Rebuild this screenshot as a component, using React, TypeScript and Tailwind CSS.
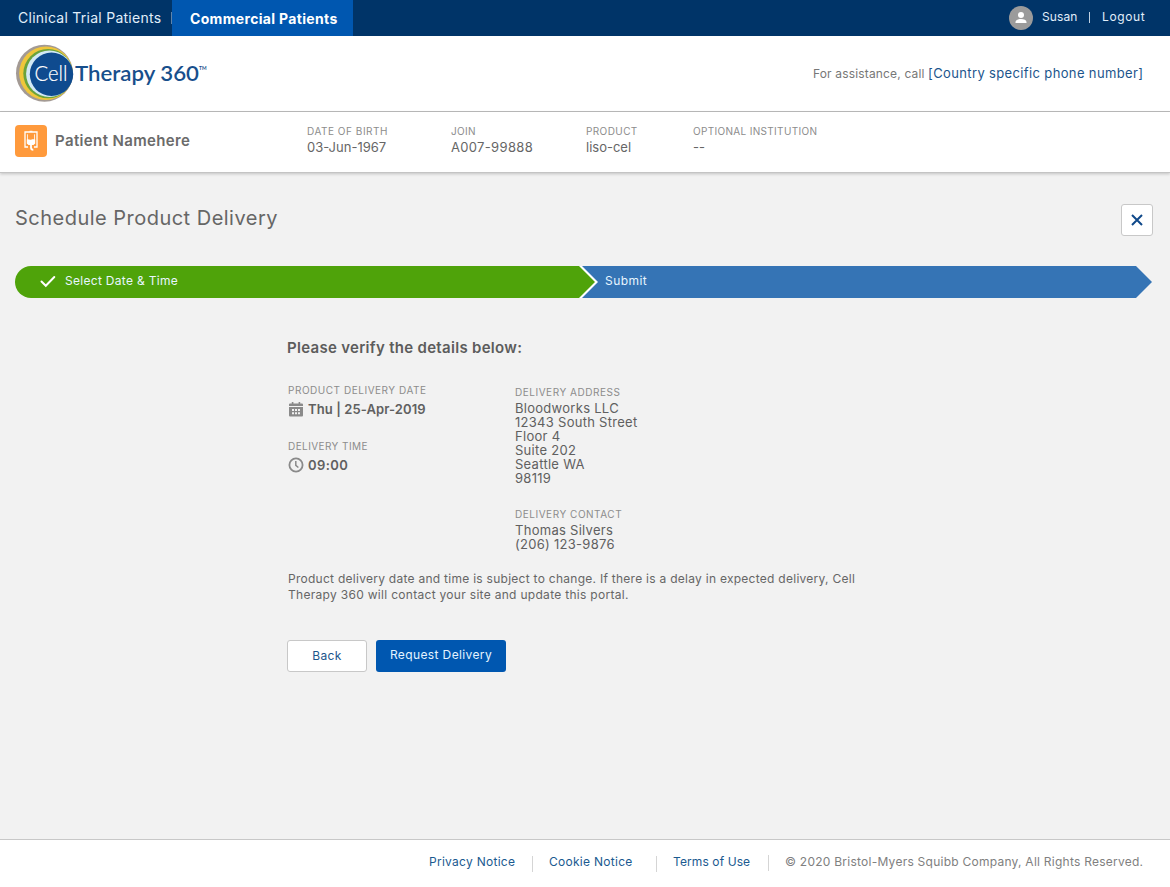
import React from 'react';

interface FieldProps {
  label: string;
  labelClass?: string;
  children: React.ReactNode;
}

const Field: React.FC<FieldProps> = ({ label, labelClass = 'tracking-[0.53px]', children }) => (
  <div className="whitespace-nowrap">
    <div className={`text-[10px] leading-4 text-[#8c8c8c] uppercase ${labelClass}`}>{label}</div>
    {children}
  </div>
);

const Logo: React.FC = () => (
  <svg width="194" height="60" viewBox="14 43 194 60" fontFamily="Lato, sans-serif">
    <circle cx="44.5" cy="73.2" r="28.5" fill="#a39a94" />
    <circle cx="46" cy="73.3" r="26.8" fill="#efc63c" />
    <circle cx="48" cy="73.6" r="24.7" fill="#6aa33c" />
    <circle cx="49.4" cy="73.8" r="23.3" fill="#d3e9f5" />
    <circle cx="51.5" cy="74.3" r="21.7" fill="#0f4b8f" />
    <text x="34.5" y="81" fontSize="22" fontWeight="300" fill="#fff" stroke="#fff" strokeWidth="0.2" textLength="33" lengthAdjust="spacingAndGlyphs">
      Cell
    </text>
    <text x="75" y="81" fontSize="21.500" fontWeight="600" fill="#174f8c" textLength="124" lengthAdjust="spacingAndGlyphs">
      Therapy 360
    </text>
    <text x="199" y="70" fontSize="5.500" fontWeight="700" fill="#174f8c" textLength="7.500" lengthAdjust="spacingAndGlyphs">
      TM
    </text>
  </svg>
);

const AvatarIcon: React.FC = () => (
  <svg width="24" height="24" viewBox="0 0 24 24">
    <circle cx="12" cy="12" r="12" fill="#9b9b9b" />
    <circle cx="12" cy="9" r="3" fill="#fff" />
    <path d="M6.500 17v-1c0-2 2.500-3 5.500-3s5.500 1 5.500 3v1z" fill="#fff" />
  </svg>
);

const InfusionBagIcon: React.FC = () => (
  <svg width="32" height="32" viewBox="0 0 32 32" fill="none" stroke="#fff">
    <path d="M13 22H10V7h12v15h-3" strokeWidth="1.300" />
    <path d="M14.500 6.300h3" strokeWidth="1" />
    <path d="M12.500 9.300v9h7v-9" strokeWidth="0.800" />
    <path d="M11.800 14.500c1.700-.6 2.700.6 4.200.2 1.500-.5 2.500-.6 4.200-.2v4l-1.700 1.500h-5l-1.700-1.500z" fill="#fff" stroke="none" />
    <path d="M16 19v3.500c0 1.700.8 2.300 2.300 2.300" strokeWidth="1.800" />
  </svg>
);

const CalendarIcon: React.FC = () => (
  <svg width="14" height="15" viewBox="0 0 14 15" fill="#8a8a8a">
    <path d="M0 5h14v8.500a1 1 0 0 1-1 1H1a1 1 0 0 1-1-1z" />
    <path d="M0 4V2.500a1 1 0 0 1 1-1h1.800V0h1.600v1.500h5.200V0h1.600v1.500H13a1 1 0 0 1 1 1V4z" />
    <path d="M3 7h2v2H3zM6 7h2v2H6zM9 7h2v2H9zM3 10.200h2v2H3zM6 10.200h2v2H6zM9 10.200h2v2H9z" fill="#f2f2f2" />
  </svg>
);

const ClockIcon: React.FC = () => (
  <svg width="16" height="16" viewBox="0 0 16 16" fill="none" stroke="#8a8a8a">
    <circle cx="8" cy="8" r="6.600" strokeWidth="1.800" />
    <path d="M7.800 4v4.300l2.600 2.200" strokeWidth="1.500" />
  </svg>
);

const TopBar: React.FC = () => (
  <nav className="flex h-9 items-stretch bg-[#003468] text-[#e0eefa] whitespace-nowrap">
    <div className="flex w-[172px] items-center justify-between pl-[18px]">
      <span className="text-[14px] leading-4 tracking-[0.26px]">Clinical Trial Patients</span>
      <span className="h-3 w-px bg-[#5f83a9]" />
    </div>
    <div className="flex w-[181px] items-center bg-[#0057b0] pt-0.5 pl-[18px] text-[14px] leading-4 font-bold text-white">
      <span className="tracking-[0.33px]">Commercial Patients</span>
    </div>
    <div className="ml-auto flex items-center pr-6 text-[12px] leading-4">
      <AvatarIcon />
      <span className="ml-[9px] w-[47px] pb-0.5 tracking-[0.1px]">Susan</span>
      <span className="mb-0.5 h-[11px] w-px bg-[#c0d0e0]" />
      <span className="ml-3 w-11 pb-0.5 tracking-[0.6px]">Logout</span>
    </div>
  </nav>
);

const PatientBar: React.FC = () => (
  <section className="grid h-[61px] grid-cols-[292px_144px_135px_107px_1fr] border-b border-[#c4c4c4] bg-white pt-[11px] pl-[15px] shadow-[0_1px_3px_rgba(0,0,0,0.2)]">
    <div className="mt-0.5 flex h-8 items-center gap-2">
      <div className="rounded bg-[#ff9a3c]">
        <InfusionBagIcon />
      </div>
      <span className="text-[15px] leading-4 font-semibold tracking-[0.37px] text-[#6b6b6b]">Patient Namehere</span>
    </div>
    <Field label="Date of birth">
      <div className="text-[13px] leading-4 text-[#666]">03-Jun-1967</div>
    </Field>
    <Field label="Join" labelClass="tracking-[0.35px]">
      <div className="text-[13px] leading-4 tracking-[0.33px] text-[#666]">A007-99888</div>
    </Field>
    <Field label="Product" labelClass="tracking-[0.4px]">
      <div className="text-[13px] leading-4 text-[#666]">liso-cel</div>
    </Field>
    <Field label="Optional institution" labelClass="tracking-[0.33px]">
      <div className="text-[13px] leading-4 text-[#666]">--</div>
    </Field>
  </section>
);

const Stepper: React.FC = () => (
  <div className="mt-[30px] flex h-8 text-[12px] leading-4 text-[#e8f6ff]">
    <div className="z-10 w-[583px] rounded-l-full bg-white [clip-path:polygon(0_0,567px_0,583px_50%,567px_100%,0_100%)]">
      <div className="flex h-8 w-[580px] items-center gap-2 rounded-l-full bg-[#4fa30a] pl-6 [clip-path:polygon(0_0,564px_0,580px_50%,564px_100%,0_100%)]">
        <svg width="18" height="16" viewBox="0 0 18 16" fill="none" stroke="#fff" strokeWidth="2" strokeLinecap="round">
          <path d="M2.500 7.500l4.300 4.300L15.300 3" />
        </svg>
        <span className="pb-0.5 tracking-[0.3px]">Select Date &amp; Time</span>
      </div>
    </div>
    <div className="-ml-4 flex w-[570px] items-center bg-[#3574b5] pl-[23px] [clip-path:polygon(0_0,554px_0,570px_50%,554px_100%,0_100%)]">
      <span className="pb-0.5 tracking-[0.45px]">Submit</span>
    </div>
  </div>
);

const addressLines = ['Bloodworks LLC', '12343 South Street', 'Floor 4', 'Suite 202', 'Seattle WA', '98119'];
const contactLines = ['Thomas Silvers', '(206) 123-9876'];

const Details: React.FC = () => (
  <div className="ml-[272px] w-[600px] pt-[42px]">
    <h2 className="text-[15px] leading-4 font-semibold tracking-[0.3px] text-[#5c5c5c]">Please verify the details below:</h2>
    <div className="mt-[26px] grid grid-cols-[227px_1fr] pl-px text-[13px] text-[#606060]">
      <div>
        <Field label="Product delivery date">
          <div className="mt-px flex h-5 items-center gap-[5px] leading-5 font-semibold tracking-[0.1px]">
            <span className="ml-px">
              <CalendarIcon />
            </span>
            Thu | 25-Apr-2019
          </div>
        </Field>
        <div className="mt-[19px]">
          <Field label="Delivery time" labelClass="tracking-[0.42px]">
            <div className="mt-px flex h-5 items-center gap-1 leading-5 font-semibold tracking-[0.4px]">
              <ClockIcon />
              09:00
            </div>
          </Field>
        </div>
      </div>
      <div className="pt-0.5 tracking-[0.28px]">
        <Field label="Delivery address">
          <div className="pt-px">
            {addressLines.map((line) => (
              <div key={line} className="leading-[14px]">
                {line}
              </div>
            ))}
          </div>
        </Field>
        <div className="mt-[21px]">
          <Field label="Delivery contact">
            <div className="pt-px">
              {contactLines.map((line) => (
                <div key={line} className="leading-[14px]">
                  {line}
                </div>
              ))}
            </div>
          </Field>
        </div>
      </div>
    </div>
    <p className="mt-5 ml-px text-[12px] leading-4 tracking-[0.27px] whitespace-nowrap text-[#666]">
      Product delivery date and time is subject to change. If there is a delay in expected delivery, Cell
      <br />
      <span className="tracking-[0.3px]">Therapy 360 will contact your site and update this portal.</span>
    </p>
    <div className="mt-[37px] flex gap-[9px] text-[12px] leading-4">
      <button className="h-8 w-20 rounded-[3px] border border-[#c8c8c8] bg-white tracking-[0.4px] text-[#1c558c]">Back</button>
      <button className="h-8 w-[130px] rounded-[3px] bg-[#0057b0] pb-0.5 tracking-[0.38px] text-[#e4f3ff]">Request Delivery</button>
    </div>
  </div>
);

const Footer: React.FC = () => (
  <footer className="flex h-12 items-start border-t border-[#c8c8c8] bg-white pt-3.5 pl-[429px] text-[12px] leading-4 whitespace-nowrap text-[#1b5a90]">
    <a className="w-[103px] tracking-[0.28px]">Privacy Notice</a>
    <span className="mt-0.5 h-4 w-px bg-[#d5d5d5]" />
    <a className="ml-4 w-[107px] tracking-[0.28px]">Cookie Notice</a>
    <span className="mt-0.5 h-4 w-px bg-[#d5d5d5]" />
    <a className="ml-4 w-[95px] tracking-[0.1px]">Terms of Use</a>
    <span className="mt-px h-4 w-px bg-[#d5d5d5]" />
    <span className="ml-4 tracking-[0.25px] text-[#808080]">© 2020 Bristol-Myers Squibb Company, All Rights Reserved.</span>
  </footer>
);

const App: React.FC = () => (
  <div className="flex h-[887px] w-[1170px] flex-col overflow-hidden bg-[#f2f2f2] font-['Inter',sans-serif]">
    <TopBar />
    <header className="flex h-[76px] items-center border-b border-[#bcbcbc] bg-white pl-3.5">
      <div className="pb-0.5">
        <Logo />
      </div>
      <div className="ml-auto w-[357px] text-[12px] leading-4 tracking-[0.16px] whitespace-nowrap text-[#777]">
        For assistance, call <span className="text-[13px] tracking-[0.36px] text-[#1c558c]">[Country specific phone number]</span>
      </div>
    </header>
    <PatientBar />
    <main className="flex-1 pt-[31px] pl-[15px]">
      <div className="flex w-[1138px] items-center justify-between">
        <h1 className="pb-1 text-[20px] leading-7 tracking-[0.48px] text-[#666]">Schedule Product Delivery</h1>
        <button className="flex size-8 items-center justify-center rounded-[3px] border border-[#c8c8c8] bg-white">
          <svg width="12" height="12" viewBox="0 0 12 12" stroke="#10498a" strokeWidth="2">
            <path d="M1 1l10 10M11 1L1 11" />
          </svg>
        </button>
      </div>
      <Stepper />
      <Details />
    </main>
    <Footer />
  </div>
);

export default App;
